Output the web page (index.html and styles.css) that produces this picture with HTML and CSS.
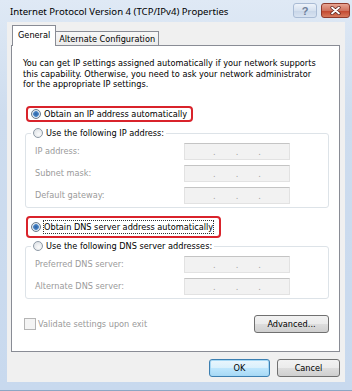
FILE: index.html
```html
<!DOCTYPE html>
<html lang="en">
<head>
    <meta charset="UTF-8">
    <title>Internet Protocol Version 4 (TCP/IPv4) Properties</title>
    <link rel="stylesheet" href="styles.css">
</head>
<body>
    <div class="window">
        <div class="titlebar">
            <span class="title">Internet Protocol Version 4 (TCP/IPv4) Properties</span>
            <div class="caption-buttons">
                <span class="cap-btn help">?</span>
                <span class="cap-btn close">
                    <svg width="11" height="9" viewBox="0 0 11 9">
                        <path d="M2 1.5 L9 7.5 M9 1.5 L2 7.5" stroke="#5a1f18" stroke-width="3.2" stroke-linecap="round"/>
                        <path d="M2 1.5 L9 7.5 M9 1.5 L2 7.5" stroke="#fff" stroke-width="1.8" stroke-linecap="round"/>
                    </svg>
                </span>
            </div>
        </div>

        <div class="client">
            <div class="tabs">
                <div class="tab active">General</div>
                <div class="tab">Alternate Configuration</div>
            </div>

            <div class="panel">
                <p class="desc">
                    You can get IP settings assigned automatically if your network supports<br>
                    this capability. Otherwise, you need to ask your network administrator<br>
                    for the appropriate IP settings.
                </p>

                <!-- red boxes are the annotation from the screenshot -->
                <div class="mark mark-ip">
                    <label class="choice"><span class="radio checked"></span>Obtain an IP address automatically</label>
                </div>

                <fieldset class="group group-ip">
                    <legend><label class="choice"><span class="radio"></span>Use the following IP address:</label></legend>
                    <div class="field"><span class="field-label">IP address:</span><span class="ipbox"><i>.</i><i>.</i><i>.</i></span></div>
                    <div class="field"><span class="field-label">Subnet mask:</span><span class="ipbox"><i>.</i><i>.</i><i>.</i></span></div>
                    <div class="field"><span class="field-label">Default gateway:</span><span class="ipbox"><i>.</i><i>.</i><i>.</i></span></div>
                </fieldset>

                <div class="mark mark-dns">
                    <label class="choice"><span class="radio checked"></span><span class="focus">Obtain DNS server address automatically</span></label>
                </div>

                <fieldset class="group group-dns">
                    <legend><label class="choice"><span class="radio"></span>Use the following DNS server addresses:</label></legend>
                    <div class="field"><span class="field-label">Preferred DNS server:</span><span class="ipbox"><i>.</i><i>.</i><i>.</i></span></div>
                    <div class="field"><span class="field-label">Alternate DNS server:</span><span class="ipbox"><i>.</i><i>.</i><i>.</i></span></div>
                </fieldset>

                <div class="panel-bottom">
                    <label class="check"><span class="checkbox"></span>Validate settings upon exit</label>
                    <button class="btn btn-advanced">Advanced...</button>
                </div>
            </div>

            <div class="footer">
                <button class="btn btn-ok">OK</button>
                <button class="btn btn-cancel">Cancel</button>
            </div>
        </div>
    </div>
</body>
</html>
```

FILE: styles.css
```css
body {
    margin: 0;
    font-family: "DejaVu Sans Condensed", "DejaVu Sans", sans-serif;
    font-size: 9.1px;
    color: #000;
}

.window {
    width: 352px;
    height: 391px;
    box-sizing: border-box;
    display: flex;
    flex-direction: column;
    padding: 0 7px 8px 7px;
    background: linear-gradient(#dfe9f5, #cddcee 30%, #c8d9ee);
    border-bottom: 1px solid #8ea6c4;
}

.titlebar {
    height: 22px;
    margin: 0 -5px 0 3px;
    display: flex;
    justify-content: space-between;
}

.title {
    font-family: "Noto Sans", sans-serif;
    font-size: 9.6px;
    line-height: 24px;
}

.caption-buttons {
    display: flex;
    gap: 4px;
    padding-top: 3px;
}

.cap-btn {
    height: 15px;
    box-sizing: border-box;
    border-radius: 3px;
    display: flex;
    align-items: center;
    justify-content: center;
}

.help {
    width: 24px;
    border: 1px solid #a9bbd4;
    background: linear-gradient(#eef3fa, #d6e1ef 50%, #c7d5e8 51%, #d8e3f1);
    color: #6e7f99;
    font-family: "Liberation Sans", sans-serif;
    font-size: 11px;
    font-weight: bold;
}

.close {
    width: 29px;
    border: 1px solid #8f3a2c;
    background: linear-gradient(#e8a593, #d0735f 50%, #c1442c 51%, #d77a5c);
}

.client {
    flex: 1;
    display: flex;
    flex-direction: column;
    padding: 3px 5px 0 4px;
    background: #f0f0f0;
}

.tabs {
    display: flex;
    align-items: flex-end;
    padding-left: 1px;
    margin-bottom: -1px;
}

.tab {
    height: 14px;
    line-height: 14px;
    padding: 0 3px 0 3px;
    border: 1px solid #898c95;
    border-bottom: none;
    border-left: none;
    background: linear-gradient(#f7f7f7, #ebebeb);
}

.tab.active {
    height: 20px;
    line-height: 19px;
    padding: 0 5px 0 5px;
    border-left: 1px solid #898c95;
    background: #fff;
    position: relative;
}

.panel {
    height: 307px;
    box-sizing: border-box;
    border: 1px solid #898c95;
    background: #fff;
    padding: 12px 10px 0 11px;
    display: flex;
    flex-direction: column;
}

.desc {
    margin: 0;
    line-height: 10.5px;
    white-space: nowrap;
}

.choice {
    display: flex;
    align-items: center;
    white-space: nowrap;
}

.radio {
    width: 10px;
    height: 10px;
    box-sizing: border-box;
    border-radius: 50%;
    border: 1px solid #8e9aa6;
    background: radial-gradient(circle at 60% 65%, #fbfbfb, #d8dde2);
    margin-right: 3px;
    flex: none;
}

.radio.checked {
    border-color: #6b7c8c;
    background: radial-gradient(circle, #2b5f9e 0, #4a86c8 2.5px, #e4ecf3 3.2px, #cfd6de 5px);
}

.mark {
    align-self: flex-start;
    border: 2px solid #d9232b;
    border-radius: 4px;
    padding: 1px 4px 1px 3px;
    margin-left: 3px;
}

.mark-ip {
    margin-top: 16px;
    padding-right: 4px;
}

.mark-dns {
    margin-top: 8px;
    padding: 3px 6px 3px 3px;
}

.focus {
    outline: 1px dotted #333;
    outline-offset: 0;
    line-height: 12px;
}

.group {
    margin: 4px 0 0 2px;
    padding: 0 0 3px 0;
    border: 1px solid #dde3e8;
    border-radius: 3px;
    color: #9a9a9a;
}

.group legend {
    margin-left: 5px;
    padding: 0 2px;
    color: #000;
    line-height: 13px;
}

.group-ip {
    margin-top: 5px;
}

.group-dns {
    margin-top: 2px;
}

.field {
    display: flex;
    align-items: center;
    padding-left: 9px;
    margin-top: 5px;
}

.field:first-of-type {
    margin-top: 3px;
}

.field-label {
    width: 149px;
}

.ipbox {
    width: 106px;
    height: 17px;
    box-sizing: border-box;
    border: 1px solid #e2e2e2;
    border-top-color: #c4c4c4;
    background: #f2f2f2;
    display: flex;
    justify-content: space-around;
    align-items: flex-end;
    padding: 0 18px 2px 18px;
    color: #a0a0a0;
}

.ipbox i {
    font-style: normal;
    line-height: 10px;
}

.panel-bottom {
    display: flex;
    align-items: center;
    justify-content: space-between;
    margin-top: 16px;
    padding-left: 1px;
}

.check {
    display: flex;
    align-items: center;
    color: #9a9a9a;
}

.checkbox {
    width: 12px;
    height: 12px;
    box-sizing: border-box;
    border: 1px solid #b5b5b5;
    background: #f4f4f4;
    margin-right: 2px;
}

.btn {
    height: 18px;
    box-sizing: border-box;
    border: 1px solid #707070;
    border-radius: 3px;
    background: linear-gradient(#f2f2f2, #ebebeb 50%, #dddddd 51%, #cfcfcf);
    font-family: inherit;
    font-size: 9.1px;
    color: #000;
    padding: 0;
}

.btn-advanced {
    width: 75px;
    margin-right: 0;
}

.footer {
    display: flex;
    justify-content: flex-end;
    gap: 7px;
    margin-top: 7px;
    padding-right: 0;
}

.btn-ok {
    width: 61px;
    border-color: #3c7fb1;
    background: linear-gradient(#eaf6fd, #d9f0fc 50%, #bee6fd 51%, #a7d9f5);
    box-shadow: inset 0 0 0 1px #a6d8f5;
}

.btn-cancel {
    width: 63px;
}
```
